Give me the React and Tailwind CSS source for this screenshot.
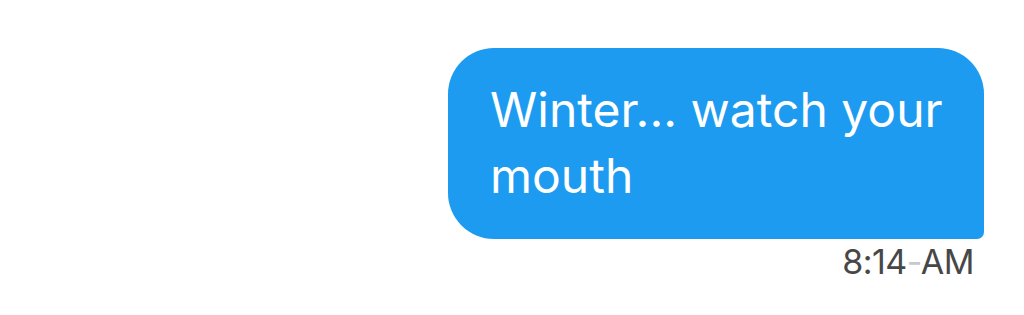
export default function App() {
  return (
    <div className="w-[1024px] h-[315px] bg-white flex flex-col items-end pt-[48px] pr-[40px]" style={{ fontFamily: "Inter, 'Noto Sans', sans-serif" }}>
      <div className="w-[536px] h-[191px] bg-[#1d9bf0] rounded-[46px] rounded-br-[7px] pl-[42px] pr-[24px] pt-[29px]">
        <p className="text-white text-[48px] leading-[66px]">
          Winter... watch your mouth
        </p>
      </div>
      <div className="mt-[3px] pr-[10px] text-[#474747] text-[34px] leading-[40px] tracking-[-0.5px]">
        8:14<span className="text-[#c8c8c8]">-</span>AM
      </div>
    </div>
  );
}
